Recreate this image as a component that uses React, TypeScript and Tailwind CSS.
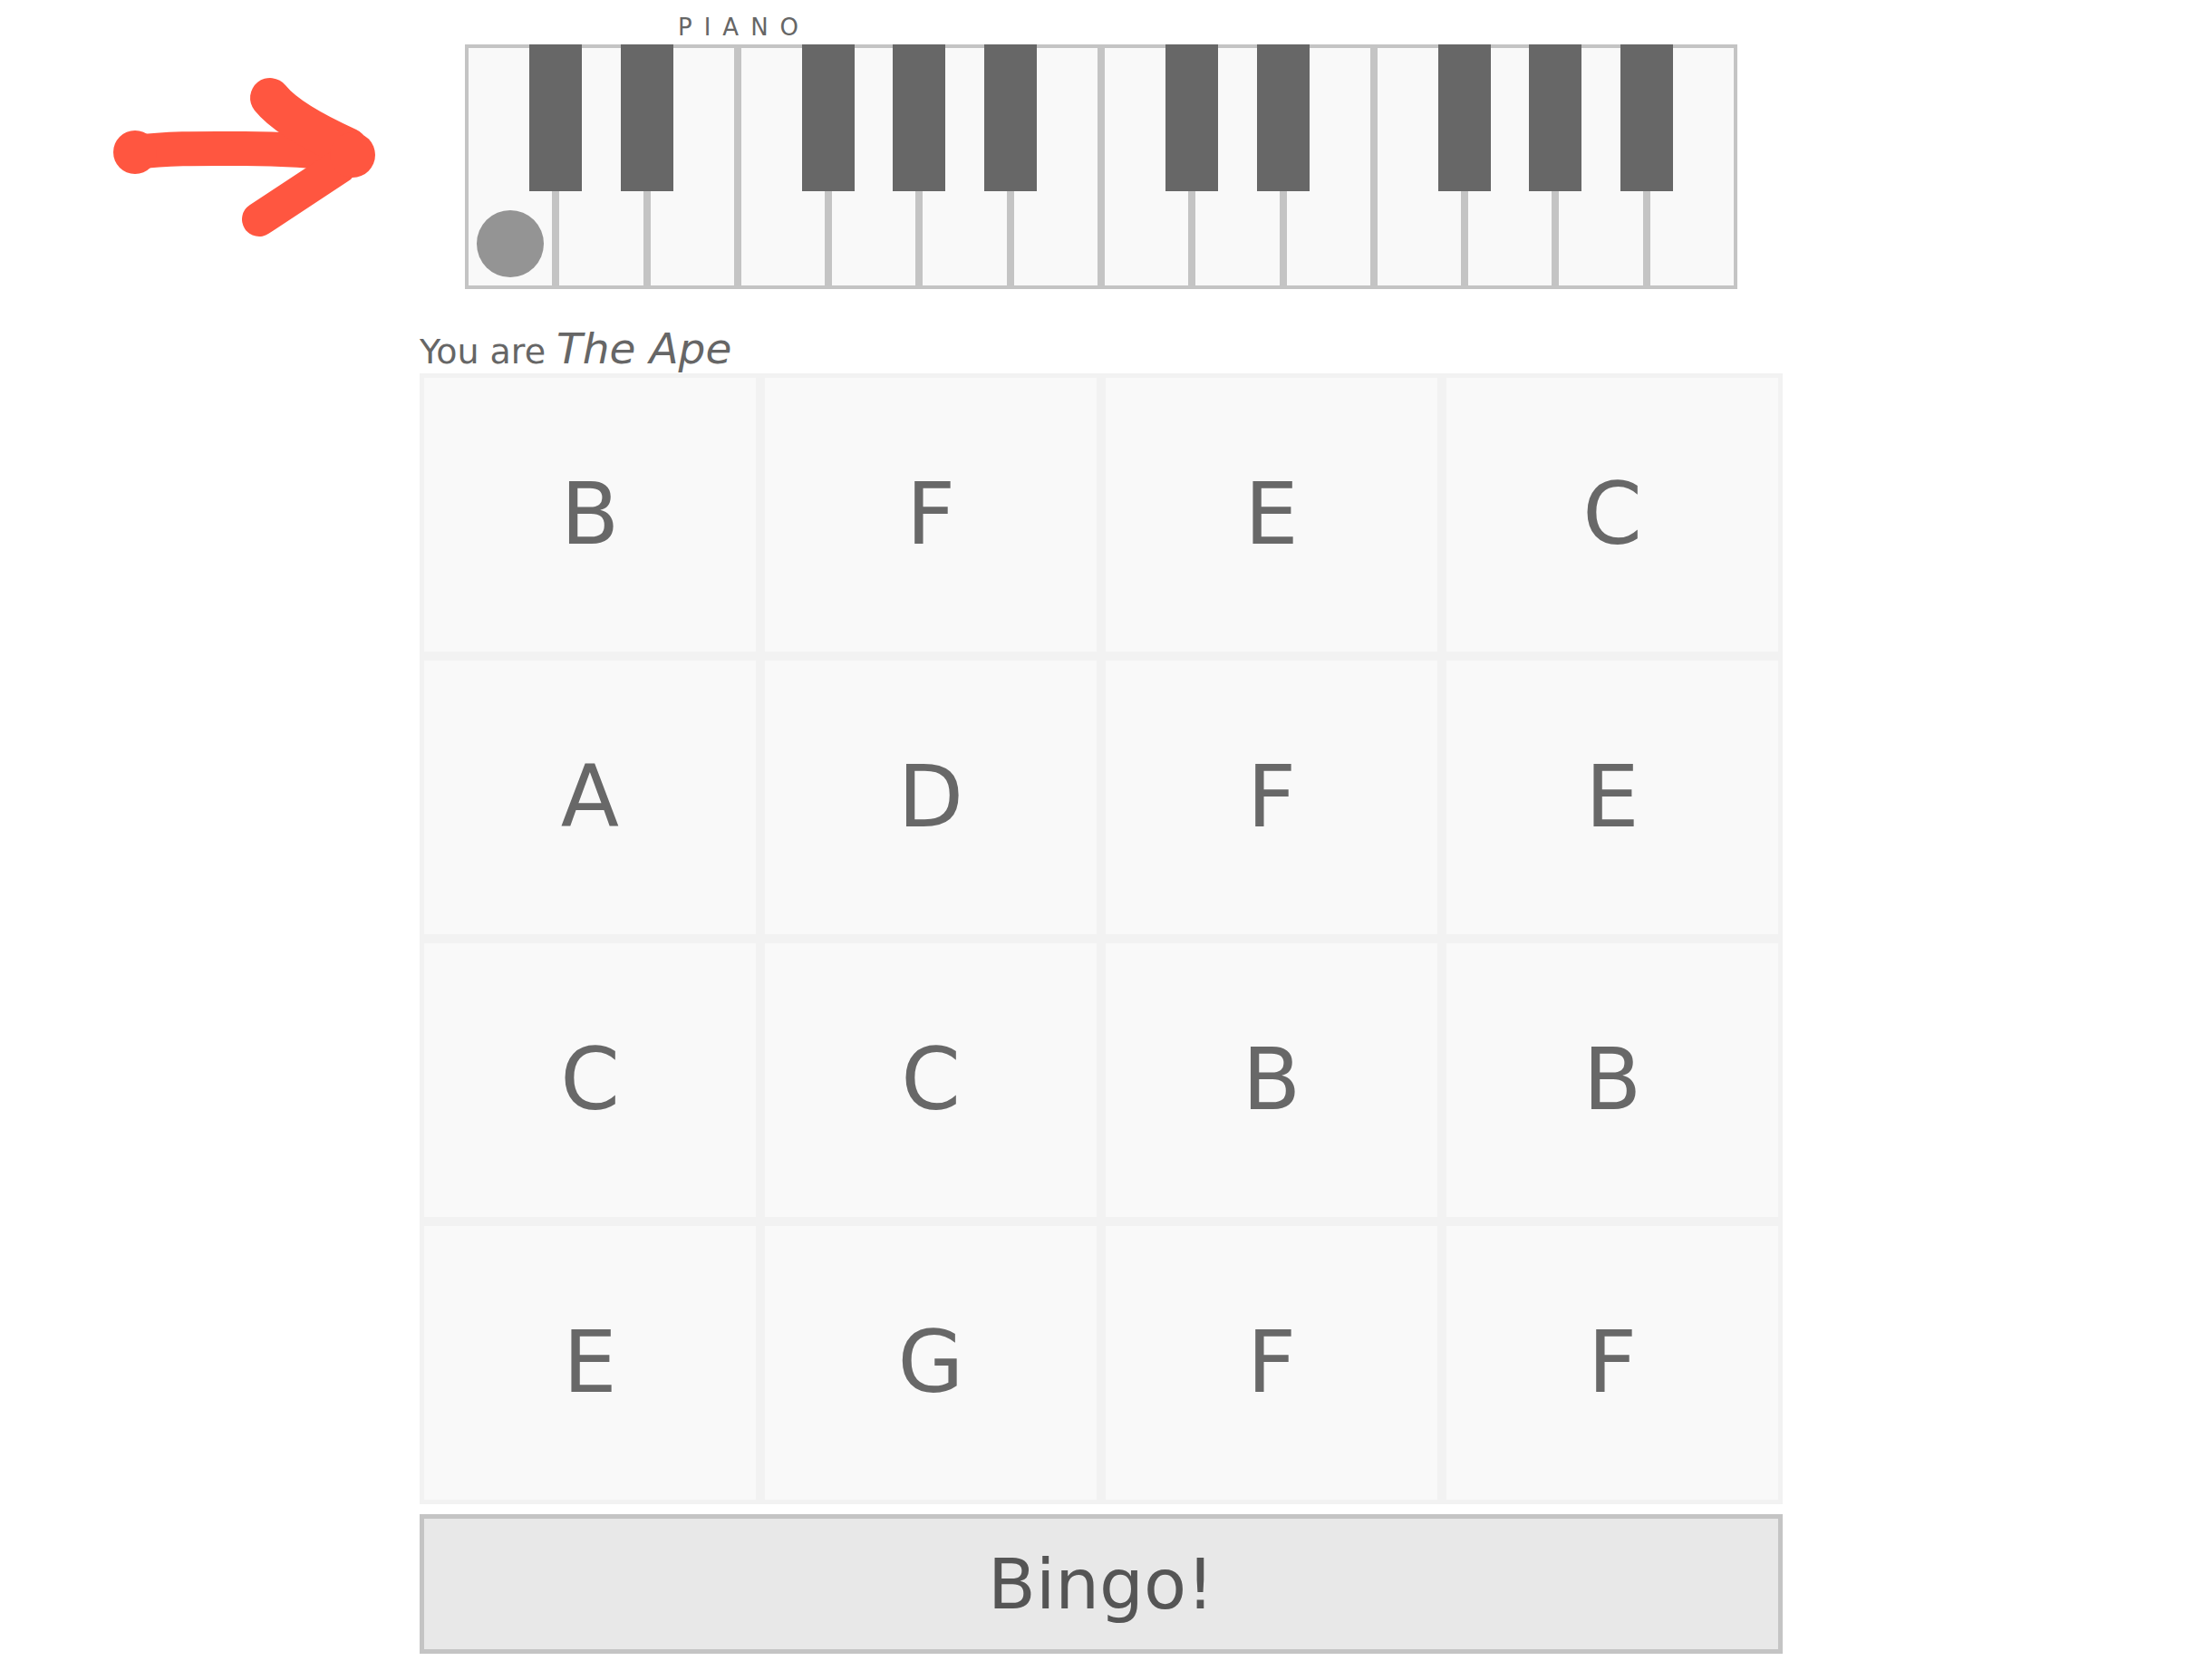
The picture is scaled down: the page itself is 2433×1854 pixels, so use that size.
import React from "react"

const blackKeys = [
  "left-[71px]",
  "left-[172px]",
  "left-[372px]",
  "left-[472px]",
  "left-[573px]",
  "left-[773px]",
  "left-[874px]",
  "left-[1074px]",
  "left-[1174px]",
  "left-[1275px]",
]

const cells = ["B", "F", "E", "C", "A", "D", "F", "E", "C", "C", "B", "B", "E", "G", "F", "F"]

function Arrow() {
  return (
    <svg width="513" height="319" viewBox="0 0 513 319" className="shrink-0">
      <g stroke="#ff5640" strokeLinecap="round" strokeLinejoin="round" fill="none">
        <path strokeWidth="38" d="M 150 168 C 190 163 230 164 270 164 S 345 166 388 171" />
        <path strokeWidth="44" d="M 298 108 Q 318 133 384 163" />
        <path strokeWidth="38" d="M 286 242 L 374 184" />
      </g>
      <circle cx="149" cy="168" r="24" fill="#ff5640" />
      <circle cx="389" cy="171" r="25" fill="#ff5640" />
    </svg>
  )
}

function Piano() {
  return (
    <div className="relative flex w-[1404px] h-[270px]">
      {Array.from({ length: 14 }).map((_, i) => (
        <div key={i} className="flex-1 border-4 border-[#c4c4c4] bg-[#f9f9f9]" />
      ))}
      {blackKeys.map((cls, i) => (
        <div key={i} className={`absolute top-0 w-[58px] h-[162px] bg-[#676767] ${cls}`} />
      ))}
      {/* marker on the first key */}
      <div className="absolute left-[13px] top-[183px] w-[74px] h-[74px] rounded-full bg-[#949494]" />
    </div>
  )
}

export default function App() {
  return (
    <div className="min-h-screen bg-white text-[#666] font-['DejaVu_Sans',sans-serif]">
      <div className="flex">
        <Arrow />
        <div>
          <div className="ml-[235px] mt-[17px] h-[26px] text-[26px] leading-[26px] tracking-[13px] text-[#666]">
            PIANO
          </div>
          <div className="mt-[6px]">
            <Piano />
          </div>
        </div>
      </div>

      <div className="ml-[463px] w-[1504px]">
        <div className="mt-[42px] h-[51px] text-[38px] leading-[48px] whitespace-nowrap">
          You are <em className="text-[47px] leading-[48px]">The Ape</em>
        </div>

        <div className="grid grid-cols-4 gap-[10px] bg-[#f2f2f2] p-[5px]">
          {cells.map((c, i) => (
            <div
              key={i}
              className="flex h-[302px] items-center justify-center bg-[#f9f9f9] text-[94px] leading-none text-[#686868]"
            >
              {c}
            </div>
          ))}
        </div>

        <button className="mt-[11px] flex h-[154px] w-full items-center justify-center border-[5px] border-[#c4c4c4] bg-[#e8e8e8] text-[77px] leading-none text-[#555]">
          Bingo!
        </button>
      </div>
    </div>
  )
}
